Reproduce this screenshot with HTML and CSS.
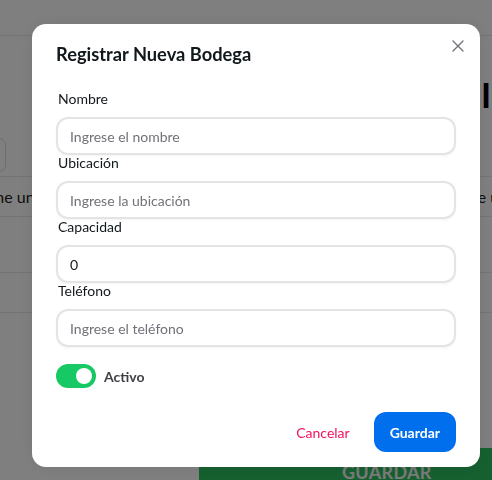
FILE: index.html
```html
<!DOCTYPE html>
<html lang="es">
<head>
<meta charset="utf-8">
<title>Registrar Nueva Bodega</title>
<link rel="stylesheet" href="styles.css">
</head>
<body>
<div class="page">
  <div class="topbar"></div>
  <div class="heading-row"><h1 class="heading">In</h1></div>
  <div class="filter-row"><div class="filter-box"></div></div>
  <div class="table-row">
    <span class="cell">Seleccione una</span>
    <span class="cell right">Seleccione una</span>
  </div>
  <div class="row-a"></div>
  <div class="row-b"></div>
  <div class="actions-row"><button class="save-bg">GUARDAR</button></div>
</div>

<div class="backdrop">
  <section class="modal" role="dialog" aria-labelledby="mtitle">
    <button class="close" aria-label="Cerrar">
      <svg width="20" height="20" viewBox="0 0 24 24" fill="none" stroke="currentColor" stroke-width="1.6" stroke-linecap="round"><path d="M18 6L6 18M6 6l12 12"/></svg>
    </button>
    <header class="modal-header" id="mtitle">Registrar Nueva Bodega</header>
    <div class="modal-body">
      <label class="field">
        <span class="label">Nombre</span>
        <span class="input"><span class="placeholder">Ingrese el nombre</span></span>
      </label>
      <label class="field">
        <span class="label">Ubicación</span>
        <span class="input"><span class="placeholder">Ingrese la ubicación</span></span>
      </label>
      <label class="field">
        <span class="label">Capacidad</span>
        <span class="input"><span class="value">0</span></span>
      </label>
      <label class="field">
        <span class="label">Teléfono</span>
        <span class="input"><span class="placeholder">Ingrese el teléfono</span></span>
      </label>
      <div class="switch-row">
        <span class="switch"><span class="knob"></span></span>
        <span class="switch-label">Activo</span>
      </div>
    </div>
    <footer class="modal-footer">
      <button class="btn btn-cancel">Cancelar</button>
      <button class="btn btn-primary">Guardar</button>
    </footer>
  </section>
</div>
</body>
</html>
```

FILE: styles.css
```css
* { box-sizing: border-box; }
html, body { margin: 0; padding: 0; }
body {
  width: 492px;
  height: 480px;
  overflow: hidden;
  font-family: Lato, Inter, "Liberation Sans", sans-serif;
  background: #ffffff;
  color: #11181c;
}

/* background page */
.page { height: 480px; overflow: hidden; }
.topbar { height: 36px; border-bottom: 1px solid #e6e6e6; }
.heading-row { height: 102px; padding-left: 481px; padding-top: 42px; white-space: nowrap; }
.heading { margin: 0; font-size: 34px; font-weight: 700; line-height: 34px; color: #000; }
.filter-row { height: 38px; }
.filter-box { width: 14px; height: 34px; margin-left: -8px; border: 1px solid #d8d8d8; border-radius: 8px; }
.table-row {
  height: 41px;
  border-top: 1px solid #e6e6e6;
  border-bottom: 1px solid #e6e6e6;
  display: flex;
  justify-content: space-between;
  align-items: center;
  font-size: 16px;
  color: #222;
  white-space: nowrap;
  overflow: hidden;
}
.cell { margin-left: -62px; }
.cell.right { margin-right: -24px; }
.row-a { height: 56px; border-bottom: 1px solid #e6e6e6; }
.row-b { height: 40px; border-bottom: 1px solid #e6e6e6; }
.actions-row { padding-top: 135px; padding-left: 199px; }
.save-bg {
  width: 300px;
  height: 40px;
  border: 0;
  background: #2cc060;
  color: #f4f4f4;
  font-family: inherit;
  font-size: 18px;
  font-weight: 700;
  text-align: left;
  padding: 8px 0 0 143px;
  letter-spacing: 0.3px;
}

/* overlay */
.backdrop {
  position: fixed;
  inset: 0;
  background: rgba(0, 0, 0, 0.5);
  display: flex;
  align-items: flex-start;
  justify-content: flex-start;
  padding: 24px 0 0 32px;
}
.modal {
  position: relative;
  width: 448px;
  background: #ffffff;
  border-radius: 14px;
  box-shadow: 0 0 15px rgba(0,0,0,0.08);
  display: flex;
  flex-direction: column;
}
.close {
  position: absolute;
  top: 4px;
  right: 4px;
  width: 36px;
  height: 36px;
  padding: 0;
  border: 0;
  background: transparent;
  color: #71717a;
  display: flex;
  align-items: center;
  justify-content: center;
  border-radius: 999px;
}
.modal-header {
  padding: 16px 24px;
  font-size: 18.3px;
  line-height: 28px;
  font-weight: 700;
  color: #11181c;
}
.modal-body {
  padding: 7px 24px 8px;
  display: flex;
  flex-direction: column;
}
.field { display: flex; flex-direction: column; }
.label {
  font-size: 14px;
  line-height: 16px;
  color: #11181c;
  margin-bottom: 10px;
  padding-left: 2px;
}
.input {
  height: 38px;
  border: 2px solid #e4e4e7;
  border-radius: 12px;
  box-shadow: 0 1px 2px rgba(0,0,0,0.05);
  display: flex;
  align-items: center;
  padding: 0 12px;
  font-size: 14px;
}
.placeholder { color: #71717a; }
.value { color: #11181c; }

.switch-row {
  display: flex;
  align-items: center;
  gap: 8px;
  margin-top: 17px;
}
.switch {
  width: 40px;
  height: 24px;
  border-radius: 999px;
  background: #17c964;
  display: flex;
  align-items: center;
  justify-content: flex-end;
  padding-right: 4px;
}
.knob { width: 16px; height: 16px; border-radius: 50%; background: #fff; }
.switch-label { font-size: 14px; font-weight: 700; color: #3f3f46; }

.modal-footer {
  display: flex;
  justify-content: flex-end;
  gap: 8px;
  padding: 16px 24px 15px;
}
.btn {
  height: 40px;
  min-width: 80px;
  padding: 0 16px;
  border: 0;
  border-radius: 12px;
  font-family: inherit;
  font-size: 14px;
  font-weight: 400;
}
.btn-cancel { background: transparent; color: #f31260; }
.btn-primary { background: #006fee; color: #ffffff; font-weight: 700; }
```
